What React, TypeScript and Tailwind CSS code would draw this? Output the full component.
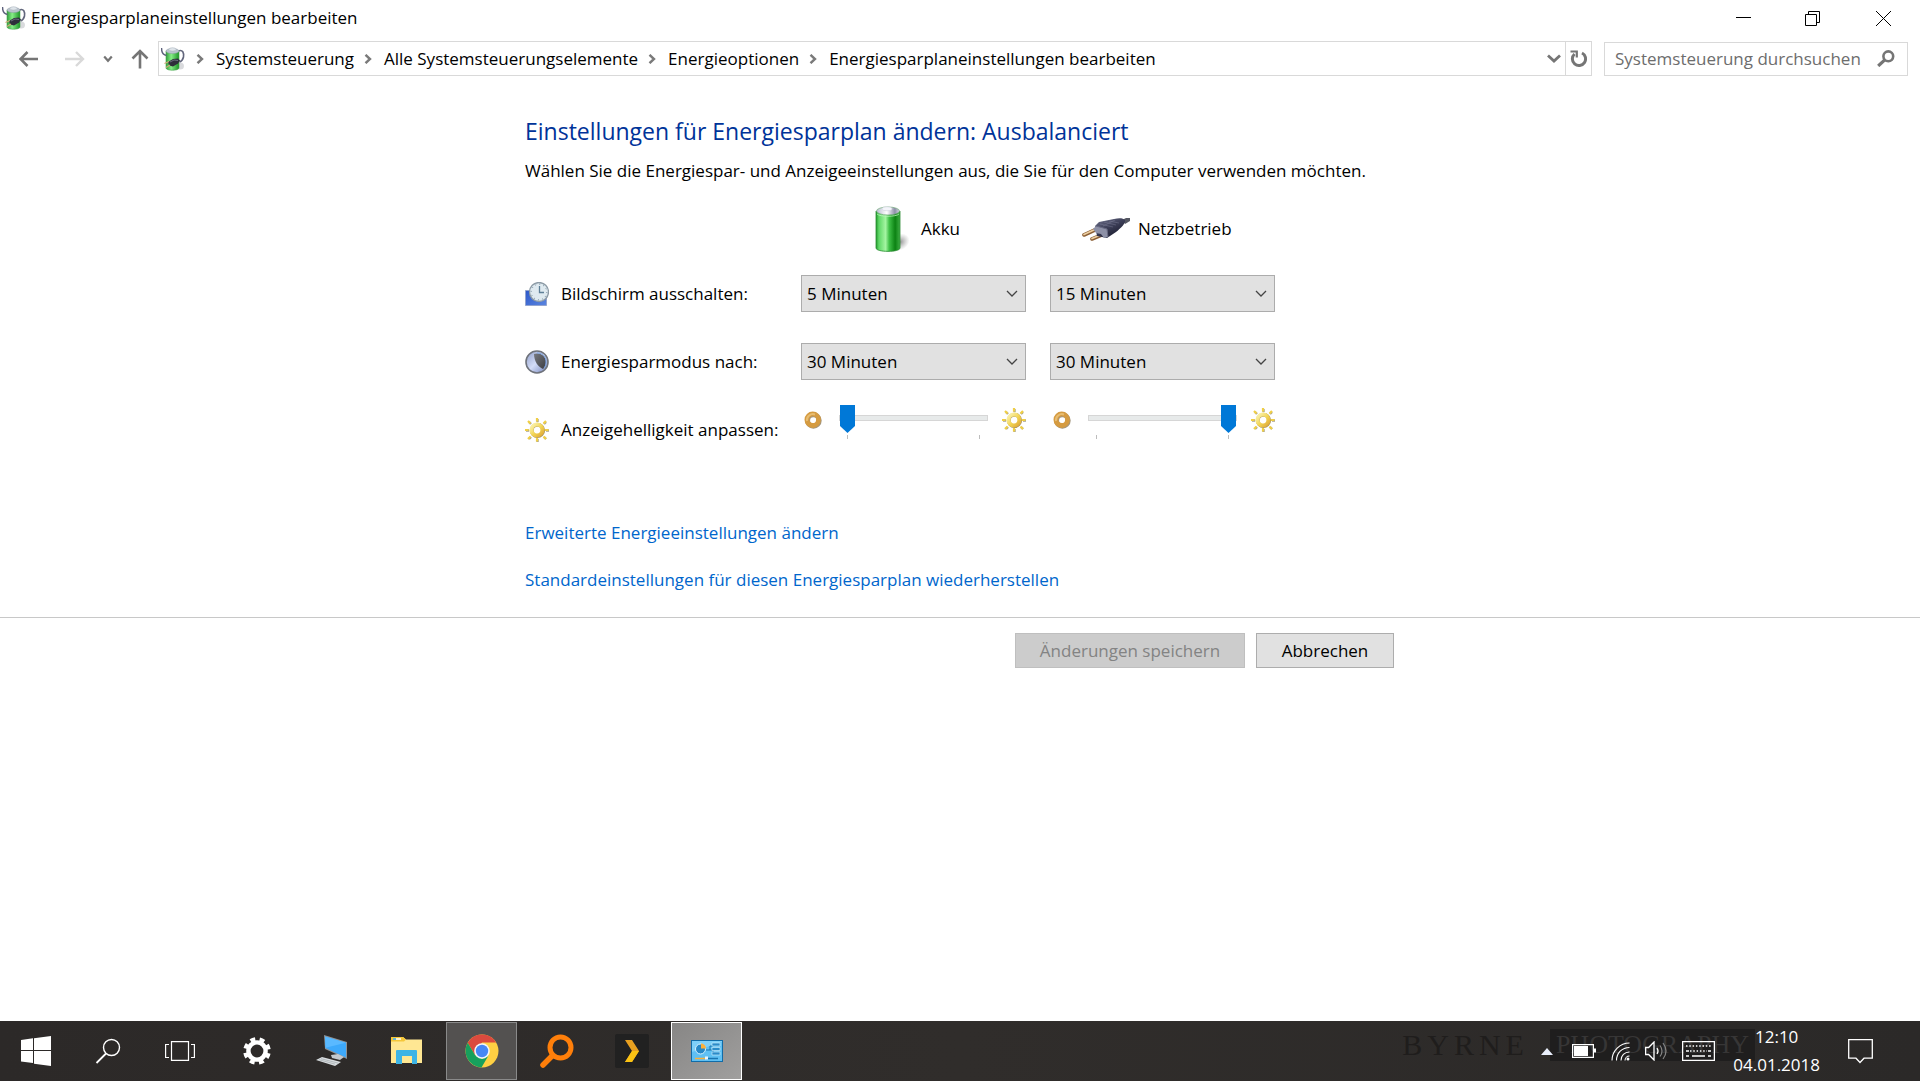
import type { ReactNode } from 'react';
import { useState } from 'react';

function PowerIcon({ id }: { id: string }) {
  return (
    <svg width="24" height="24" viewBox="0 0 24 24" aria-hidden="true" className="shrink-0">
      <defs>
        <linearGradient id={id} x1="0" x2="1">
          <stop offset="0" stopColor="#2f9e3a" />
          <stop offset="0.4" stopColor="#86ee86" />
          <stop offset="1" stopColor="#1c9426" />
        </linearGradient>
      </defs>
      <ellipse cx="19" cy="19" rx="4" ry="3.500" fill="#c9cbcf" opacity="0.7" />
      <path d="M5 4v17c0 3 13 3 13 0V4z" fill={`url(#${id})`} stroke="#4aa653" strokeWidth="0.6" />
      <path d="M0.500 1c0 5 2 7 5 7.500" fill="none" stroke="#5d617c" strokeWidth="1.500" />
      <path d="M17 4c5-2 6 2 5.500 6-.5 2-1.500 4-4 5" fill="none" stroke="#62667c" strokeWidth="1.600" />
      <ellipse cx="11.500" cy="4" rx="6.500" ry="2.600" fill="#b9c3cc" stroke="#8f9aa6" strokeWidth="0.5" />
      <ellipse cx="11.500" cy="2.400" rx="3.500" ry="1.700" fill="#dfe5ea" stroke="#a9b2bc" strokeWidth="0.5" />
      <path d="M7 15l5-3 5-.5 2 2-2 3-5 3-4-1z" fill="#2e2f3b" />
      <path d="M8 14.500L3.500 16.500M9 18L5 20.500" stroke="#d0a977" strokeWidth="1.300" />
      <path d="M9 15l4-2 4 .5" fill="none" stroke="#7b7d92" strokeWidth="0.8" />
    </svg>
  );
}

function BatteryLarge() {
  return (
    <svg width="48" height="48" viewBox="0 0 48 48" aria-hidden="true">
      <defs>
        <linearGradient id="cell" x1="0" x2="1">
          <stop offset="0" stopColor="#1f9a2a" />
          <stop offset="0.12" stopColor="#5fd867" />
          <stop offset="0.4" stopColor="#a4f5a2" />
          <stop offset="0.55" stopColor="#3fc047" />
          <stop offset="0.8" stopColor="#0c8213" />
          <stop offset="1" stopColor="#3fae45" />
        </linearGradient>
        <linearGradient id="cap" x1="0" x2="1">
          <stop offset="0" stopColor="#b9bdd0" />
          <stop offset="0.45" stopColor="#ffffff" />
          <stop offset="0.8" stopColor="#8d8fa8" />
          <stop offset="1" stopColor="#d4d6e2" />
        </linearGradient>
        <radialGradient id="cellShadow">
          <stop offset="0" stopColor="#777" stopOpacity="0.8" />
          <stop offset="1" stopColor="#999" stopOpacity="0" />
        </radialGradient>
      </defs>
      <ellipse cx="35" cy="37" rx="10" ry="8" fill="url(#cellShadow)" transform="rotate(-30 35 37)" />
      <path d="M11 6v37c0 4.500 24 4.500 24 0V6z" fill="url(#cell)" />
      <path d="M11 6v37c0 4.500 24 4.500 24 0V6" fill="none" stroke="#2b8c33" strokeWidth="0.8" />
      <path d="M12 9c3 3 19 3 22 0" fill="none" stroke="#b8f5b8" strokeWidth="0.8" />
      <ellipse cx="23" cy="6" rx="11.500" ry="4" fill="url(#cap)" stroke="#6fa877" strokeWidth="0.7" />
      <ellipse cx="22" cy="3.800" rx="5" ry="2" fill="#f4f5fa" stroke="#c9cbd8" strokeWidth="0.5" />
    </svg>
  );
}

function PlugLarge() {
  return (
    <svg width="48" height="48" viewBox="0 0 48 48" aria-hidden="true">
      <defs>
        <linearGradient id="plugBody" x1="0" y1="0" x2="0.700" y2="1">
          <stop offset="0" stopColor="#71748f" />
          <stop offset="0.5" stopColor="#3d3f58" />
          <stop offset="1" stopColor="#17182b" />
        </linearGradient>
      </defs>
      <path d="M40 15l4-2h4v3l-5 3z" fill="#555762" />
      <path d="M2 30l13-6M10 34l12-5" stroke="#8c5f35" strokeWidth="3.600" strokeLinecap="round" />
      <path d="M2 29.500l13-6M10 33.500l12-5" stroke="#edcfa2" strokeWidth="1.700" strokeLinecap="round" />
      <path d="M13 21l4-4 15-3c5-1 9-1 11 1 1 3-4 8-9 12l-9 6-10-2z" fill="url(#plugBody)" />
      <path d="M11 24l3-3 11 3 1 8-4 1-3-4-5-1z" fill="#8d90a6" />
      <path d="M14 21l11 3M25 24l1 8" stroke="#676982" strokeWidth="1" fill="none" />
      <path d="M18 19l13 3M22 17l12 3M27 16l10 2M21 21l12-6" stroke="#8b8da6" strokeWidth="0.6" opacity="0.6" />
    </svg>
  );
}

function ClockScreenIcon() {
  return (
    <svg width="24" height="24" viewBox="0 0 24 24" aria-hidden="true">
      <defs>
        <linearGradient id="screen" x1="0" y1="0" x2="1" y2="1">
          <stop offset="0" stopColor="#2b57c9" />
          <stop offset="1" stopColor="#5b86e0" />
        </linearGradient>
      </defs>
      <path d="M0.500 8.500h21v15h-21z" fill="url(#screen)" stroke="#93a4cf" />
      <circle cx="14" cy="10" r="9.500" fill="#dfeaf0" stroke="#8d9ba6" strokeWidth="1.300" />
      <circle cx="14" cy="10" r="7.800" fill="none" stroke="#6e8799" strokeWidth="1" strokeDasharray="1 3.080" />
      <path d="M14.500 4v6.500H19" fill="none" stroke="#5e7f97" strokeWidth="1.300" />
    </svg>
  );
}

function MoonIcon() {
  return (
    <svg width="24" height="24" viewBox="0 0 24 24" aria-hidden="true">
      <defs>
        <linearGradient id="moon" x1="0" y1="0" x2="1" y2="1">
          <stop offset="0" stopColor="#8f9dc6" />
          <stop offset="0.5" stopColor="#d3dcf8" />
          <stop offset="1" stopColor="#6d7fb8" />
        </linearGradient>
        <linearGradient id="moonDark" x1="0" y1="0" x2="1" y2="1">
          <stop offset="0" stopColor="#77797f" />
          <stop offset="1" stopColor="#3c3d43" />
        </linearGradient>
      </defs>
      <circle cx="12" cy="12" r="11" fill="url(#moon)" stroke="#6f737b" strokeWidth="1.600" />
      <path d="M9 4c5-2 12 1 12 8 0 3-1 5-3 7-5-2-9-8-9-15z" fill="url(#moonDark)" />
      <path d="M12 3c6 0 9 4 9 9 0 3-1 5-2 6" fill="none" stroke="#7aa2e0" strokeWidth="1" />
    </svg>
  );
}

function SunIcon({ id }: { id: string }) {
  return (
    <svg width="24" height="24" viewBox="0 0 24 24" aria-hidden="true" className="shrink-0">
      <defs>
        <linearGradient id={id} x1="0" y1="0" x2="1" y2="1">
          <stop offset="0" stopColor="#fbf3b0" />
          <stop offset="0.55" stopColor="#f2d453" />
          <stop offset="1" stopColor="#dfa93a" />
        </linearGradient>
      </defs>
      <path
        d="M12.500 1v3M12.500 21v3M1 12.500h3M21 12.500h3M4 4l2 2M19 19l2 2M4 21l2-2M19 6l2-2"
        stroke="#a9a38f"
        strokeWidth="2.400"
      />
      <path
        d="M12 0v3.500M12 20v3.500M0 12h3.500M20 12h3.500M3 3l2.500 2.500M18.500 18.500l2.500 2.500M3 21l2.500-2.500M18.500 5.500L21 3"
        stroke="#f0cf45"
        strokeWidth="2.200"
      />
      <circle cx="12.400" cy="12.400" r="5.700" fill="none" stroke="#a39265" strokeWidth="4" />
      <circle cx="12" cy="12" r="5.500" fill="none" stroke={`url(#${id})`} strokeWidth="4.200" />
    </svg>
  );
}

function DimIcon() {
  return (
    <svg width="18" height="18" viewBox="0 0 18 18" aria-hidden="true" className="shrink-0">
      <circle cx="9.400" cy="9.500" r="5.800" fill="none" stroke="#a3957d" strokeWidth="5" />
      <circle cx="8.700" cy="8.700" r="5.800" fill="none" stroke="#d59b41" strokeWidth="4.800" />
      <path d="M3 10a6 6 0 0 1 8-6.500" fill="none" stroke="#e8bd71" strokeWidth="2" />
    </svg>
  );
}

function Crumb({ children }: { children: ReactNode }) {
  return (
    <li className="flex items-center gap-3">
      <svg width="8" height="10" viewBox="0 0 8 10" aria-hidden="true">
        <path d="M1.500 0.800L6 5 1.500 9.200" fill="none" stroke="#7a7a7a" strokeWidth="2.400" />
      </svg>
      <a href="#">{children}</a>
    </li>
  );
}

interface TimeSelectProps {
  id: string;
  label: string;
  initial: string;
}

function TimeSelect({ id, label, initial }: TimeSelectProps) {
  const [value, setValue] = useState(initial);

  return (
    <div className="relative">
      <select
        id={id}
        aria-label={label}
        value={value}
        onChange={(e) => setValue(e.target.value)}
        className="block h-[37px] w-full appearance-none rounded-none border border-[#acacac] bg-[#e1e1e1] px-[5px] text-black"
      >
        <option>5 Minuten</option>
        <option>15 Minuten</option>
        <option>30 Minuten</option>
      </select>
      <svg
        width="12"
        height="8"
        viewBox="0 0 12 8"
        aria-hidden="true"
        className="pointer-events-none absolute top-[15px] right-2"
      >
        <path d="M1 1l5 5 5-5" fill="none" stroke="#444" strokeWidth="1.300" />
      </svg>
    </div>
  );
}

interface BrightnessProps {
  id: string;
  label: string;
  initial: number;
}

function Brightness({ id, label, initial }: BrightnessProps) {
  const [value, setValue] = useState(initial);

  return (
    <div className="flex items-center pl-[3px]">
      <DimIcon />
      <div className="ml-[17px] w-[149px] pt-1">
        <input
          id={id}
          type="range"
          aria-label={label}
          min={0}
          max={100}
          value={value}
          onChange={(e) => setValue(Number(e.target.value))}
          className="block h-7 w-full appearance-none bg-transparent [&::-webkit-slider-runnable-track]:h-[6px] [&::-webkit-slider-runnable-track]:border [&::-webkit-slider-runnable-track]:border-[#d6d6d6] [&::-webkit-slider-runnable-track]:bg-[#e7eaea] [&::-webkit-slider-thumb]:-mt-[11px] [&::-webkit-slider-thumb]:h-7 [&::-webkit-slider-thumb]:w-[15px] [&::-webkit-slider-thumb]:appearance-none [&::-webkit-slider-thumb]:bg-[#0078d7] [&::-webkit-slider-thumb]:[clip-path:polygon(0_0,100%_0,100%_75%,50%_100%,0_75%)]"
        />
        <div className="flex justify-between px-2 pt-[3px]">
          <span className="h-1 w-px bg-[#bdbdbd]" />
          <span className="h-1 w-px bg-[#bdbdbd]" />
        </div>
      </div>
      <div className="ml-auto">
        <SunIcon id={`${id}-sun`} />
      </div>
    </div>
  );
}

function TaskButton({ label, className = '', children }: { label: string; className?: string; children: ReactNode }) {
  return (
    <button type="button" aria-label={label} className={`flex h-[58px] w-[71px] items-center justify-center ${className}`}>
      {children}
    </button>
  );
}

function Taskbar() {
  return (
    <footer className="relative flex h-[60px] items-center bg-linear-to-r from-[#2c2928] via-[#302d2b] to-[#2b2928] text-white">
      {/* Wallpaper lettering showing through the bar */}
      <div className="pointer-events-none absolute top-2 right-[165px] flex h-8 items-center gap-[21px] font-['Liberation_Serif',serif] text-[30px] leading-8 text-[#1f1d1c]">
        <span className="tracking-[5px]">BYRNE</span>
        <span className="bg-[#1f1e1e] px-[6px] text-[26px] text-[#373636]">PHOTOGRAPHY</span>
      </div>

      <div className="relative flex items-center">
        <button type="button" aria-label="Start" className="flex h-[58px] w-[72px] items-center justify-center">
          <svg width="30" height="30" viewBox="0 0 30 30" fill="#fff" aria-hidden="true">
            <path d="M0 4l12-1.700V14H0zM13 2.200L30 0v14H13zM0 15h12v12L0 25.500zM13 15h17v15l-17-2.300z" />
          </svg>
        </button>
        <button type="button" aria-label="Suchen" className="flex h-[58px] w-[72px] items-center justify-center">
          <svg width="26" height="26" viewBox="0 0 26 26" fill="none" stroke="#fff" aria-hidden="true">
            <circle cx="16.500" cy="9.500" r="8" strokeWidth="1.400" />
            <path d="M11 15.500L1.500 25" strokeWidth="1.800" />
          </svg>
        </button>
        <button type="button" aria-label="Aktive Anwendungen" className="flex h-[58px] w-[72px] items-center justify-center">
          <svg width="30" height="20" viewBox="0 0 30 20" fill="none" stroke="#fff" strokeWidth="1.200" aria-hidden="true">
            <path d="M6.500 0.600h17v18.800h-17zM4 3.500H0.600v13H4M26 3.500h3.400v13H26" />
          </svg>
        </button>
      </div>

      <div className="relative ml-[5px] flex items-center gap-1">
        <TaskButton label="Einstellungen">
          <svg width="28" height="28" viewBox="0 0 28 28" aria-hidden="true">
            <circle cx="14" cy="14" r="8.600" fill="none" stroke="#fff" strokeWidth="4.400" />
            <circle cx="14" cy="14" r="11.800" fill="none" stroke="#fff" strokeWidth="4" strokeDasharray="4.900 4.368" transform="rotate(11 14 14)" />
          </svg>
        </TaskButton>
        <TaskButton label="Dieser PC">
          <svg width="32" height="32" viewBox="0 0 32 32" aria-hidden="true">
            <path d="M8 0l23 7v17L9 14z" fill="#8d9296" />
            <path d="M9 1.500l21 6.300v14.700L9.500 13z" fill="#3da9fb" />
            <path d="M9 1.500l21 6.300-20.500 5z" fill="#5ab9ff" />
            <path d="M15 20l7-1 6 3-4 3-8-2z" fill="#c3c9ce" />
            <path d="M0 25l6-3 19 5-6 4z" fill="#d9dde0" />
            <path d="M3 24.700l16 4.400M5 23.700l17 4.400" stroke="#a1a7ab" strokeWidth="0.7" />
          </svg>
        </TaskButton>
        <TaskButton label="Explorer">
          <svg width="32" height="28" viewBox="0 0 32 28" aria-hidden="true">
            <path d="M0 0h12l3 2.500h16V26H0z" fill="#ffe793" />
            <path d="M0 0h12l3 2.500-2 2H0z" fill="#f5c73a" />
            <path d="M2 2h8" stroke="#fff" strokeWidth="1.500" />
            <path d="M2 2h3" stroke="#30a3d8" strokeWidth="1.500" />
            <path d="M5 14q0-1 1-1h19q1 0 1 1v13h-5v-8H11v8H5z" fill="#3db4e6" />
          </svg>
        </TaskButton>
        <TaskButton label="Google Chrome" className="border border-[#8a8a8a] bg-[#535150]">
          <svg width="34" height="34" viewBox="0 0 34 34" aria-hidden="true">
            <circle cx="17" cy="17" r="16.500" fill="#ffd043" />
            <path d="M17 .5A16.500 16.500 0 0 0 2.700 8.800L10 21l7-12.500h14.200A16.500 16.500 0 0 0 17 .5z" fill="#db4a3e" />
            <path d="M2.700 8.800A16.500 16.500 0 0 0 16.500 33.500L23.500 21.500 17 25 10 21z" fill="#17a05d" />
            <circle cx="17" cy="17" r="7.800" fill="#f5f5f5" />
            <circle cx="17" cy="17" r="6.200" fill="#4787f5" />
          </svg>
        </TaskButton>
        <TaskButton label="Suchprogramm">
          <svg width="34" height="34" viewBox="0 0 34 34" fill="none" stroke="#ff7f0a" aria-hidden="true">
            <circle cx="20.500" cy="13.500" r="10.500" strokeWidth="5" />
            <path d="M12.500 21.500L3 31" strokeWidth="5.500" strokeLinecap="round" />
          </svg>
        </TaskButton>
        <TaskButton label="Plex">
          <svg width="34" height="34" viewBox="0 0 34 34" aria-hidden="true">
            <rect width="34" height="34" rx="2" fill="#212121" />
            <path d="M10 6h7l7 11-7 11h-7l7-11z" fill="#e8a020" />
            <path d="M17 17h7l-7 11h-7z" fill="#fbc313" />
          </svg>
        </TaskButton>
        <TaskButton label="Systemsteuerung" className="border border-white bg-linear-to-br from-[#878685] to-[#a09f9e]">
          <svg width="32" height="22" viewBox="0 0 32 22" aria-hidden="true">
            <rect x="0.500" y="0.500" width="31" height="21" fill="#7ed0f9" stroke="#116ca8" />
            <path d="M1 12L31 2v19H1z" fill="#5fc0f3" />
            <circle cx="9.500" cy="9" r="5" fill="#2689c8" stroke="#d7f1fd" strokeWidth="1" />
            <path d="M10 8.500V3.500a5 5 0 0 1 5 5z" fill="#fbb03b" />
            <path d="M15 10h4V6h3M19 10h3v4" fill="none" stroke="#1975b1" />
            <path d="M21 3h8v3h-8zM21 7.500h8v3h-8zM21 12h8v3h-8z" fill="#2a8bc9" stroke="#d7f1fd" strokeWidth="0.6" />
            <path d="M4 18.500h10" stroke="#fbb03b" strokeWidth="1.500" />
            <path d="M15 18.500h12" stroke="#1975b1" strokeWidth="1.500" />
            <path d="M14 16.500h3v3h-3z" fill="#e8f7ff" />
          </svg>
        </TaskButton>
      </div>

      <div className="relative ml-auto flex items-center pr-[47px]">
        <div className="flex items-center gap-[15px] pr-[18px]">
          <button type="button" aria-label="Ausgeblendete Symbole" className="mr-1">
            <svg width="12" height="7" viewBox="0 0 12 7" aria-hidden="true">
              <path d="M6 0l6 7H0z" fill="#e9eefb" />
            </svg>
          </button>
          <svg width="24" height="14" viewBox="0 0 24 14" role="img" aria-label="Akku">
            <path d="M0.600 0.600h20.800v12.800H0.600z" fill="none" stroke="#fff" strokeWidth="1.200" />
            <path d="M2 2h14v10H2zM21.500 4.500H24v4h-2.500z" fill="#fff" />
          </svg>
          <svg width="19" height="19" viewBox="0 0 19 19" fill="none" stroke="#fff" role="img" aria-label="WLAN">
            <path d="M1 18.500C1 9 9 1 18.500 1M5.500 18.500C5.500 11 11 5.500 18.500 5.500M10 18.500c0-5 3.500-8.500 8.500-8.500M14 18.500c0-2.500 2-4.500 4.500-4.500" strokeWidth="1.100" />
            <circle cx="17" cy="17" r="1.500" fill="#fff" stroke="none" />
          </svg>
          <svg width="22" height="20" viewBox="0 0 22 20" fill="none" stroke="#fff" role="img" aria-label="Lautstärke">
            <path d="M0.600 6.500h3L9 1v18l-5.400-5.500h-3z" strokeWidth="1.300" />
            <path d="M12 7q2 3 0 6" strokeWidth="1.300" />
            <path d="M15 4.500q4 5.500 0 11M18 2q6 8 0 16" stroke="#858585" strokeWidth="1.200" />
          </svg>
          <svg width="33" height="20" viewBox="0 0 33 20" fill="none" stroke="#fff" role="img" aria-label="Tastatur">
            <path d="M0.600 0.600h31.800v18.800H0.600z" strokeWidth="1.300" />
            <path d="M4 5h25M8 10h17" strokeWidth="1.500" strokeDasharray="1.500 1.800" />
            <path d="M4 10h3M26 10h3M4 15h3M10 15h13M26 15h3" strokeWidth="1.500" />
          </svg>
        </div>
        <time className="text-center leading-7">
          12:10
          <br />
          04.01.2018
        </time>
        <button type="button" aria-label="Benachrichtigungen" className="ml-7">
          <svg width="25" height="25" viewBox="0 0 25 25" fill="none" stroke="#fff" strokeWidth="1.300" aria-hidden="true">
            <path d="M0.700 0.700h23.600v18.500h-8.300L12 23.500l-4-4.300H0.700z" />
          </svg>
        </button>
      </div>
    </footer>
  );
}

export default function App() {
  return (
    <div className="flex min-h-screen flex-col bg-white font-['Open_Sans','Noto_Sans',sans-serif] text-[17px] leading-6 text-black">
      {/* Title bar */}
      <header className="flex h-9 items-center justify-between pr-[29px] pl-[2px]">
        <div className="flex items-center gap-[5px]">
          <PowerIcon id="title-power" />
          <span>Energiesparplaneinstellungen bearbeiten</span>
        </div>
        <div className="flex items-center">
          <button type="button" aria-label="Minimieren">
            <svg width="15" height="15" viewBox="0 0 15 15" aria-hidden="true">
              <path d="M0 6.500h15" stroke="#000" />
            </svg>
          </button>
          <button type="button" aria-label="Verkleinern" className="ml-[54px]">
            <svg width="15" height="15" viewBox="0 0 15 15" fill="none" stroke="#000" aria-hidden="true">
              <path d="M0.500 3.500h11v11h-11zM3.500 3.500v-3h11v11h-3" />
            </svg>
          </button>
          <button type="button" aria-label="Schließen" className="ml-14">
            <svg width="15" height="15" viewBox="0 0 15 15" stroke="#000" aria-hidden="true">
              <path d="M0 0l15 15M15 0L0 15" />
            </svg>
          </button>
        </div>
      </header>

      {/* Navigation and address bar */}
      <div className="flex items-center pt-[5px] pr-3 pl-[19px]">
        <div className="flex w-[139px] shrink-0 items-center">
          <button type="button" aria-label="Zurück">
            <svg width="20" height="16" viewBox="0 0 20 16" fill="none" stroke="#757575" strokeWidth="2.600" aria-hidden="true">
              <path d="M19 8H2M8.500 1l-7 7 7 7" />
            </svg>
          </button>
          <button type="button" aria-label="Vorwärts" className="ml-[26px]">
            <svg width="20" height="16" viewBox="0 0 20 16" fill="none" stroke="#d9d9d9" strokeWidth="2.400" aria-hidden="true">
              <path d="M0 8h17.500M11 1l7 7-7 7" />
            </svg>
          </button>
          <button type="button" aria-label="Verlauf" className="ml-[18px]">
            <svg width="10" height="8" viewBox="0 0 10 8" fill="none" stroke="#757575" strokeWidth="2.200" aria-hidden="true">
              <path d="M1.200 1.500L5 5.800l3.800-4.300" />
            </svg>
          </button>
          <button type="button" aria-label="Nach oben" className="ml-[18px]">
            <svg width="18" height="20" viewBox="0 0 18 20" fill="none" stroke="#757575" strokeWidth="2.600" aria-hidden="true">
              <path d="M9 19.500V2M1.500 9.500L9 2l7.500 7.500" />
            </svg>
          </button>
        </div>
        <div className="flex h-[35px] min-w-0 flex-1 items-center border border-[#d9d9d9] pl-[2px]">
          <PowerIcon id="address-power" />
          <ol className="ml-[11px] flex items-center gap-[10px] whitespace-nowrap">
            <Crumb>Systemsteuerung</Crumb>
            <Crumb>Alle Systemsteuerungselemente</Crumb>
            <Crumb>Energieoptionen</Crumb>
            <Crumb>Energiesparplaneinstellungen bearbeiten</Crumb>
          </ol>
          <button type="button" aria-label="Vorherige Orte" className="ml-auto pr-1">
            <svg width="14" height="9" viewBox="0 0 14 9" fill="none" stroke="#757575" strokeWidth="2.800" aria-hidden="true">
              <path d="M1 1.500l6 5.500 6-5.500" />
            </svg>
          </button>
          <button type="button" aria-label="Aktualisieren" className="flex h-full w-[26px] items-center justify-center border-l border-[#d9d9d9]">
            <svg width="17" height="18" viewBox="0 0 17 18" fill="none" stroke="#757575" strokeWidth="3" aria-hidden="true">
              <path d="M12 3A6.600 6.600 0 1 1 4.500 4" />
              <path d="M0.500 1.500h6.300v6" strokeWidth="2.200" />
            </svg>
          </button>
        </div>
        <form role="search" className="ml-3 flex h-[34px] w-[304px] shrink-0 items-center border border-[#d9d9d9] pr-3 pl-[10px]">
          <input
            type="search"
            aria-label="Systemsteuerung durchsuchen"
            placeholder="Systemsteuerung durchsuchen"
            className="min-w-0 flex-1 outline-none placeholder:text-[#6d6d6d]"
          />
          <svg width="18" height="17" viewBox="0 0 18 17" fill="none" stroke="#757575" aria-hidden="true">
            <circle cx="11.300" cy="6.300" r="4.900" strokeWidth="2.600" />
            <path d="M7.800 9.800L1.200 16" strokeWidth="3.200" />
          </svg>
        </form>
      </div>

      <main className="flex-1">
        <section className="mx-auto w-[870px] pt-[39px]">
          <h1 className="text-[23px] leading-8 text-[#003399]">Einstellungen für Energiesparplan ändern: Ausbalanciert</h1>
          <p className="mt-3 whitespace-nowrap">
            Wählen Sie die Energiespar- und Anzeigeeinstellungen aus, die Sie für den Computer verwenden möchten.
          </p>

          <div className="mt-[22px] grid grid-cols-[252px_225px_225px] items-center gap-x-6 whitespace-nowrap">
            <div className="col-start-2 flex items-center gap-2 pl-16">
              <BatteryLarge />
              Akku
            </div>
            <div className="flex items-center gap-2 pl-8">
              <PlugLarge />
              Netzbetrieb
            </div>
          </div>

          <div className="mt-[22px] grid grid-cols-[252px_225px_225px] gap-x-6 gap-y-[31px] whitespace-nowrap">
            <label htmlFor="display-battery" className="flex h-[37px] items-center gap-3">
              <ClockScreenIcon />
              Bildschirm ausschalten:
            </label>
            <TimeSelect id="display-battery" label="Bildschirm ausschalten, Akku" initial="5 Minuten" />
            <TimeSelect id="display-plugged" label="Bildschirm ausschalten, Netzbetrieb" initial="15 Minuten" />

            <label htmlFor="sleep-battery" className="flex h-[37px] items-center gap-3">
              <MoonIcon />
              Energiesparmodus nach:
            </label>
            <TimeSelect id="sleep-battery" label="Energiesparmodus nach, Akku" initial="30 Minuten" />
            <TimeSelect id="sleep-plugged" label="Energiesparmodus nach, Netzbetrieb" initial="30 Minuten" />

            <label htmlFor="brightness-battery" className="flex h-[37px] items-center gap-3">
              <SunIcon id="label-sun" />
              Anzeigehelligkeit anpassen:
            </label>
            <div className="-mt-[11px]">
              <Brightness id="brightness-battery" label="Anzeigehelligkeit, Akku" initial={0} />
            </div>
            <div className="-mt-[11px]">
              <Brightness id="brightness-plugged" label="Anzeigehelligkeit, Netzbetrieb" initial={100} />
            </div>
          </div>

          <ul className="mt-[73px] space-y-[23px] text-[#0066cc]">
            <li>
              <a href="#">Erweiterte Energieeinstellungen ändern</a>
            </li>
            <li>
              <a href="#">Standardeinstellungen für diesen Energiesparplan wiederherstellen</a>
            </li>
          </ul>
        </section>

        <div className="mt-[25px] border-t border-[#c8c8c8] pt-[15px]">
          <div className="mx-auto flex w-[870px] justify-end gap-[11px] pr-px">
            <button type="button" disabled className="h-[35px] w-[230px] border border-[#bfbfbf] bg-[#cccccc] text-[#838383]">
              Änderungen speichern
            </button>
            <button type="button" className="h-[35px] w-[138px] border border-[#adadad] bg-[#e1e1e1]">
              Abbrechen
            </button>
          </div>
        </div>
      </main>

      <Taskbar />
    </div>
  );
}
